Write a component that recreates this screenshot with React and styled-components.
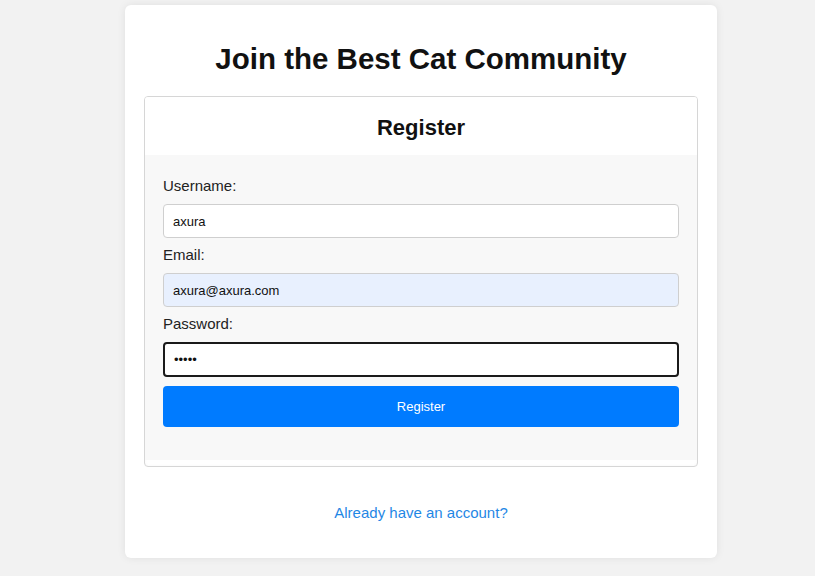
import React from "react";
import styled, { createGlobalStyle } from "styled-components";

const GlobalStyle = createGlobalStyle`
  html, body {
    margin: 0;
    padding: 0;
    background: #f2f2f2;
    font-family: "Liberation Sans", Arial, sans-serif;
  }
`

const Page = styled.div`
  min-height: 576px;
  padding: 5px 0 0 125px;
  box-sizing: border-box;
`

const Card = styled.div`
  width: 592px;
  box-sizing: border-box;
  background: #fff;
  border-radius: 6px;
  box-shadow: 0 0 8px rgba(0, 0, 0, 0.08);
  padding: 36px 19px 36px;
`

const Heading = styled.h1`
  margin: 0 0 19px;
  font-size: 29.5px;
  line-height: 36px;
  font-weight: 700;
  color: #111;
  text-align: center;
`

const Panel = styled.div`
  border: 1px solid #d6d6d6;
  border-radius: 4px;
  overflow: hidden;
  box-shadow: inset 0 0 3px rgba(0, 0, 0, 0.04);
`

const PanelHeader = styled.div`
  background: #fff;
  height: 58px;
  padding-top: 3px;
  box-sizing: border-box;
  display: flex;
  align-items: center;
  justify-content: center;
  font-size: 22px;
  font-weight: 700;
  color: #111;
`

const PanelBody = styled.form`
  background: #f8f8f8;
  padding: 22px 18px 33px;
  margin-bottom: 6px;
  display: flex;
  flex-direction: column;
`

const Label = styled.label`
  display: block;
  font-size: 15px;
  line-height: 18px;
  color: #222;
  margin-bottom: 9px;
`

const Input = styled.input`
  display: block;
  width: 100%;
  box-sizing: border-box;
  height: ${p => (p.$focused ? "35px" : "34px")};
  margin-bottom: ${p => (p.$focused ? "9px" : "8px")};
  padding: 0 9px;
  font-family: "Liberation Sans", Arial, sans-serif;
  font-size: 13px;
  color: #111;
  caret-color: #111;
  background: ${p => (p.$autofill ? "#e8f0fe" : "#fff")};
  border: ${p => (p.$focused ? "2px solid #1a1a1a" : "1px solid #cfcfcf")};
  border-radius: 4px;
  outline: none;
`

const Button = styled.button`
  height: 41px;
  width: 100%;
  border: none;
  border-radius: 4px;
  background: #007bff;
  color: #fff;
  font-family: "Liberation Sans", Arial, sans-serif;
  font-size: 13px;
  cursor: pointer;
`

const Footer = styled.div`
  margin-top: 37px;
  text-align: center;
`

const SignInLink = styled.a`
  font-size: 15px;
  line-height: 18px;
  color: #1f87e5;
  text-decoration: none;
`

const App = () => (
  <>
    <GlobalStyle />
    <Page>
      <Card>
        <Heading>Join the Best Cat Community</Heading>
        <Panel>
          <PanelHeader>Register</PanelHeader>
          <PanelBody onSubmit={e => e.preventDefault()}>
            <Label htmlFor="username">Username:</Label>
            <Input id="username" defaultValue="axura" />
            <Label htmlFor="email">Email:</Label>
            <Input id="email" $autofill defaultValue="axura@axura.com" />
            <Label htmlFor="password">Password:</Label>
            <Input id="password" type="password" $focused autoFocus defaultValue="axura" />
            <Button type="submit">Register</Button>
          </PanelBody>
        </Panel>
        <Footer>
          <SignInLink href="#">Already have an account?</SignInLink>
        </Footer>
      </Card>
    </Page>
  </>
);

export default App;
